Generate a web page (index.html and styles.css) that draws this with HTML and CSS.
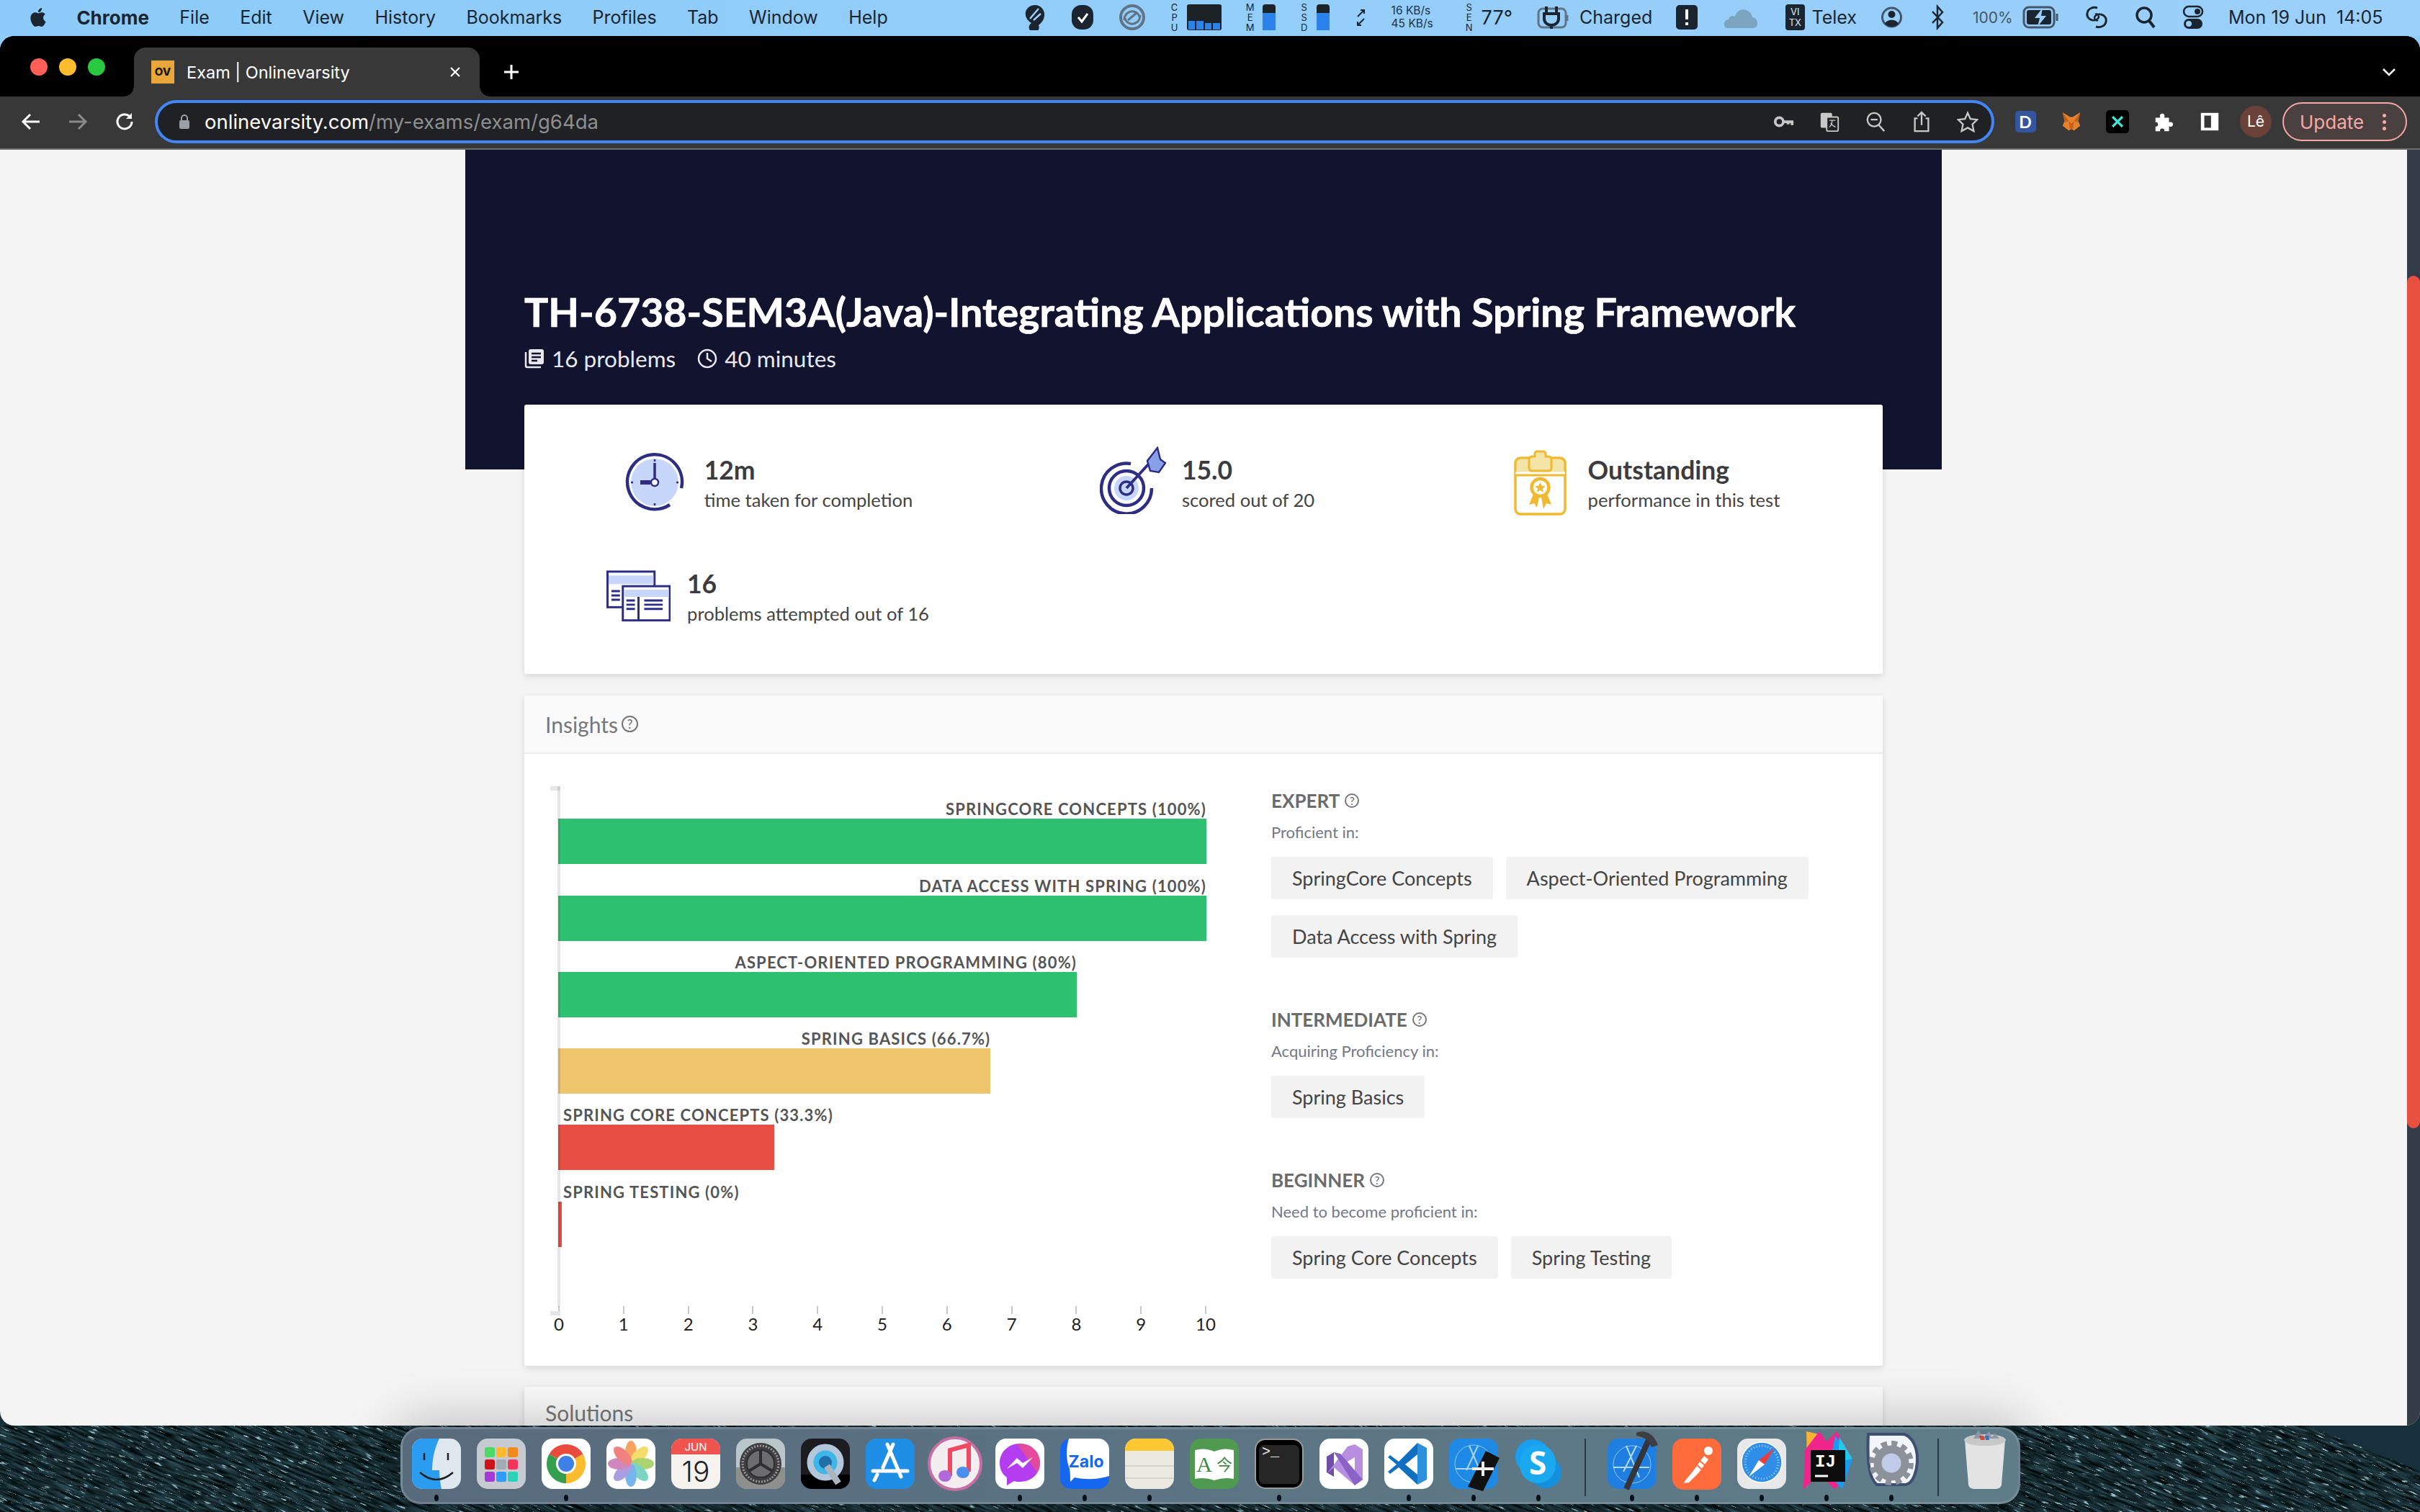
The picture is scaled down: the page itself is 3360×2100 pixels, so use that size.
FILE: index.html
```html
<!DOCTYPE html>
<html lang="en">

<head>
  <meta charset="UTF-8">
  <title>Exam | Onlinevarsity</title>
  <link rel="stylesheet" href="styles.css">
</head>

<body>
  <!-- mac menu bar -->
  <div class="menubar">
    <svg class="apple" viewBox="0 0 24 24"><path fill="#1b2530" d="M12.152 6.896c-.948 0-2.415-1.078-3.96-1.04-2.04.027-3.91 1.183-4.961 3.014-2.117 3.675-.546 9.103 1.519 12.09 1.013 1.454 2.208 3.09 3.792 3.039 1.52-.065 2.09-.987 3.935-.987 1.831 0 2.35.987 3.96.948 1.637-.026 2.676-1.48 3.676-2.948 1.156-1.688 1.636-3.325 1.662-3.415-.039-.013-3.182-1.221-3.22-4.857-.026-3.04 2.48-4.494 2.597-4.559-1.429-2.09-3.623-2.324-4.39-2.376-2-.156-3.675 1.09-4.61 1.09zM15.53 3.83c.843-1.012 1.4-2.427 1.245-3.83-1.207.052-2.662.805-3.532 1.818-.78.896-1.454 2.338-1.273 3.714 1.338.104 2.715-.688 3.559-1.701"/></svg>
    <span class="app-name">Chrome</span>
    <span>File</span><span>Edit</span><span>View</span><span>History</span><span>Bookmarks</span><span>Profiles</span><span>Tab</span><span>Window</span><span>Help</span>

    <div class="status">
      <svg class="st st-32" viewBox="0 0 32 36"><path d="M16 1c9 0 14 8 13 15-1 8-6 11-8 13a7 7 0 1 1-10-3C5 22 2 17 3 11 4 5 10 1 16 1z" fill="#1b2530"/><path d="M9 20 21 6M14 22l10-9" stroke="#9acffa" stroke-width="2.500"/></svg>
      <svg class="st st-32" viewBox="0 0 32 36"><rect x="1" y="1" width="30" height="34" rx="13" fill="#1b2530"/><path d="M10 18l5 6 8-11" stroke="#fff" stroke-width="3" fill="none"/></svg>
      <svg class="st st-38" viewBox="0 0 38 36"><circle cx="19" cy="18" r="16" fill="none" stroke="#5f7486" stroke-width="4"/><path d="M8 22c0-9 7-13 13-12 5 1 8 5 8 8M30 15c0 9-7 13-13 12-5-1-8-5-8-8M13 22 25 12" fill="none" stroke="#5f7486" stroke-width="3"/></svg>

      <div class="pair gauge">
        <span class="vert">C<br>P<br>U</span>
        <div class="cpu-graph"><i class="h-a"></i><i class="h-a"></i><i class="h-b"></i><i class="h-b"></i></div>
      </div>
      <div class="pair gauge">
        <span class="vert">M<br>E<br>M</span>
        <div class="mini-bar"><i></i></div>
      </div>
      <div class="pair gauge">
        <span class="vert">S<br>S<br>D</span>
        <div class="mini-bar"><i></i></div>
      </div>
      <svg class="st st-18" viewBox="0 0 18 36"><path d="M5 17 14 8M9 8h5v5M14 20 5 29M5 24v5h5" stroke="#1b2530" stroke-width="2" fill="none"/></svg>
      <div class="net"><span>16 KB/s</span><span>45 KB/s</span></div>
      <div class="pair temp">
        <span class="vert">S<br>E<br>N</span>
        <span class="temp-val">77°</span>
      </div>
      <div class="pair charged">
        <svg class="st st-44" viewBox="0 0 44 36"><rect x="2" y="6" width="38" height="26" rx="6" fill="none" stroke="#5f7486" stroke-width="3"/><path d="M42 15v8" stroke="#5f7486" stroke-width="3"/><path d="M13 3v10M27 3v10M10 13h20v7a10 9 0 0 1-20 0zM20 28v6" stroke="#1b2530" stroke-width="4" fill="none"/></svg>
        <span>Charged</span>
      </div>
      <svg class="st st-32" viewBox="0 0 32 36"><rect x="1" y="1" width="30" height="34" rx="5" fill="#1b2530"/><path d="M16 7v14M16 25v4" stroke="#fff" stroke-width="4"/></svg>
      <svg class="st st-53" viewBox="0 0 53 36"><path d="M6 33c-6-1-6-11 2-12 1-5 6-6 9-4 3-13 21-13 24 1 8 0 10 14 2 15z" fill="#7ba4c1"/></svg>
      <div class="pair telex">
        <div class="telex-mark">VI<br>TX</div>
        <span>Telex</span>
      </div>
      <svg class="st st-29" viewBox="0 0 29 36"><circle cx="14.500" cy="18" r="13" fill="none" stroke="#44566a" stroke-width="3"/><circle cx="14.500" cy="14" r="5" fill="#1b2530"/><path d="M5 27c3-7 16-7 19 0a13 13 0 0 1-19 0z" fill="#1b2530"/></svg>
      <svg class="st st-30" viewBox="0 0 30 36"><path d="M8 10 22 25 15 33V3l7 8L8 26" fill="none" stroke="#1b2530" stroke-width="2.500"/></svg>
      <div class="pair batt">
        <span class="pct">100%</span>
        <svg class="st st-52" viewBox="0 0 52 32"><rect x="2" y="2" width="42" height="28" rx="7" fill="none" stroke="#44566a" stroke-width="3"/><rect x="6" y="6" width="34" height="20" rx="3" fill="#1b2530"/><path d="M48 11v10" stroke="#44566a" stroke-width="3"/><path d="M28 3 17 17h7l-3 12 12-15h-7z" fill="#9acffa"/></svg>
      </div>
      <svg class="st st-34" viewBox="0 0 34 36"><path d="M18 5c-6-2-13 1-14 7-1 5 2 9 7 10M16 31c6 2 13-1 14-7 1-5-2-9-7-10" fill="none" stroke="#1b2530" stroke-width="3"/><path d="M11 22c5 1 9-2 9-5s-3-4-5-3M23 14c-5-1-9 2-9 5s3 4 5 3" fill="none" stroke="#1b2530" stroke-width="2.500"/></svg>
      <svg class="st st-34" viewBox="0 0 34 36"><circle cx="15" cy="15" r="10" fill="none" stroke="#1b2530" stroke-width="3.500"/><path d="M22 23l7 9" stroke="#1b2530" stroke-width="4"/></svg>
      <svg class="st st-30" viewBox="0 0 30 36"><rect x="2" y="3" width="26" height="14" rx="7" fill="none" stroke="#1b2530" stroke-width="2.500"/><circle cx="21" cy="10" r="4" fill="#1b2530"/><rect x="2" y="20" width="26" height="14" rx="7" fill="#1b2530"/><circle cx="9" cy="27" r="4" fill="#9acffa"/></svg>
      <span class="clock-text">Mon 19 Jun&nbsp;&nbsp;14:05</span>
    </div>
  </div>

  <div class="window">
    <!-- tab strip -->
    <div class="tabstrip">
      <div class="lights"><i class="red"></i><i class="amber"></i><i class="green"></i></div>
      <div class="tab">
        <span class="favicon">OV</span>
        <span class="tab-title">Exam | Onlinevarsity</span>
        <svg class="tab-x" viewBox="0 0 16 16"><path d="M2 2l12 12M14 2 2 14" stroke="#fff" stroke-width="2.200"/></svg>
      </div>
      <svg class="new-tab" viewBox="0 0 24 24"><path d="M12 2v20M2 12h20" stroke="#fff" stroke-width="3"/></svg>
      <svg class="tab-menu" viewBox="0 0 20 12"><path d="M2 2l8 8 8-8" fill="none" stroke="#fff" stroke-width="2.500"/></svg>
    </div>

    <!-- toolbar -->
    <div class="toolbar">
      <div class="nav-btn"><svg viewBox="0 0 28 28"><path d="M26 14H3M13 4 3 14l10 10" fill="none" stroke="#fff" stroke-width="3"/></svg></div>
      <div class="nav-btn"><svg viewBox="0 0 28 28"><path d="M2 14h23M15 4l10 10-10 10" fill="none" stroke="#8a8a8a" stroke-width="3"/></svg></div>
      <div class="nav-btn"><svg viewBox="0 0 28 28"><path d="M24 14a10 10 0 1 1-3-7.200" fill="none" stroke="#fff" stroke-width="3"/><path d="M24 2v8h-8z" fill="#fff"/></svg></div>
      <div class="omnibox">
        <svg class="lock" viewBox="0 0 16 22"><path d="M4 10V6a4 4 0 0 1 8 0v4" fill="none" stroke="#9aa0a6" stroke-width="2"/><rect x="1" y="9" width="14" height="12" rx="2" fill="#9aa0a6"/></svg>
        <span class="url"><b>onlinevarsity.com</b>/my-exams/exam/g64da</span>
        <div class="omni-act"><svg viewBox="0 0 32 32"><circle cx="10" cy="16" r="6" fill="none" stroke="#c8c8c8" stroke-width="4"/><path d="M16 16h13v5M23 16v4" fill="none" stroke="#c8c8c8" stroke-width="4"/></svg></div>
        <div class="omni-act"><svg viewBox="0 0 32 32"><rect x="3" y="3" width="17" height="22" rx="2" fill="#c8c8c8"/><rect x="12" y="9" width="17" height="21" rx="2" fill="#202124" stroke="#c8c8c8" stroke-width="2"/><path d="M16 14h9M20 14c0 6-2 8-4 10M18 18c2 3 4 5 7 6" fill="none" stroke="#c8c8c8" stroke-width="1.500"/></svg></div>
        <div class="omni-act"><svg viewBox="0 0 32 32"><circle cx="14" cy="13" r="10" fill="none" stroke="#c8c8c8" stroke-width="2.500"/><path d="M21 21l8 9M9 13h10" stroke="#c8c8c8" stroke-width="2.500"/></svg></div>
        <div class="omni-act"><svg viewBox="0 0 32 32"><path d="M10 11H6v19h20V11h-4M16 21V2M10 8l6-6 6 6" fill="none" stroke="#c8c8c8" stroke-width="2.500"/></svg></div>
        <div class="omni-act"><svg viewBox="0 0 32 32"><path d="M16 3l4 9 10 1-7 7 2 10-9-5-9 5 2-10-7-7 10-1z" fill="none" stroke="#c8c8c8" stroke-width="2.500"/></svg></div>
      </div>
      <div class="extensions">
        <div class="ext"><span class="ext-d">D</span></div>
        <div class="ext"><svg viewBox="0 0 32 32"><path d="M3 2l11 7h4l11-7-3 12 3 8-9 7-4-2-4 2-9-7 3-8z" fill="#e8812c"/><path d="M12 15l4 4 4-4-2 12h-4z" fill="#c65f1c"/><path d="M3 2l9 13-6 2zM29 2l-9 13 6 2z" fill="#b9641f"/></svg></div>
        <div class="ext"><div class="ext-x"><svg viewBox="0 0 32 32"><path d="M6 6l20 20M26 6 6 26" stroke="#3ee6d6" stroke-width="5"/></svg></div></div>
        <div class="ext"><svg viewBox="0 0 32 32"><path d="M4 10h7c-3-8 9-8 6 0h7v7c8-3 8 9 0 6v7h-7c2-5-8-5-6 0H4v-7c5 2 5-8 0-6z" fill="#fff"/></svg></div>
        <div class="ext"><svg viewBox="0 0 32 32"><rect x="3" y="3" width="26" height="26" fill="#fff"/><rect x="8" y="7" width="10" height="18" fill="#363636"/></svg></div>
        <div class="ext"><span class="avatar">Lê</span></div>
      </div>
      <div class="update-pill">
        <span>Update</span>
        <i class="dots"><b></b><b></b><b></b></i>
      </div>
    </div>

    <!-- page -->
    <div class="viewport">
      <div class="page">
        <div class="exam-header">
          <h1>TH-6738-SEM3A(Java)-Integrating Applications with Spring Framework</h1>
          <div class="exam-meta">
            <span class="meta-item">
              <svg class="meta-icon" viewBox="0 0 28 28"><path d="M2 5v19a2 2 0 0 0 2 2h19" fill="none" stroke="#e8e8ee" stroke-width="2.500"/><rect x="6" y="1" width="21" height="21" rx="3" fill="#e8e8ee"/><path d="M10 7h13M10 12h13M10 17h8" stroke="#11132f" stroke-width="2.500"/></svg>
              16 problems
            </span>
            <span class="meta-item">
              <svg class="meta-icon" viewBox="0 0 28 28"><circle cx="14" cy="14" r="12" fill="none" stroke="#e8e8ee" stroke-width="2.500"/><path d="M14 6v8l6 4" fill="none" stroke="#e8e8ee" stroke-width="2.500"/></svg>
              40 minutes
            </span>
          </div>
        </div>

        <div class="cards">
          <div class="card summary">
            <div class="stat">
              <svg class="stat-clock" viewBox="0 0 84 84">
                <circle cx="41" cy="42" r="33" fill="#c7d6fb"/>
                <path d="M62 73A38 38 0 1 1 78 50" fill="none" stroke="#2d2d86" stroke-width="4.500"/>
                <path d="M41 10v3M41 71v3M8 42h3M71 42h3" stroke="#2d2d86" stroke-width="2.500"/>
                <path d="M41 15v23" stroke="#2d2d86" stroke-width="3.500"/>
                <path d="M21 42h14" stroke="#2d2d86" stroke-width="6"/>
                <circle cx="41" cy="42" r="5" fill="#fff" stroke="#2d2d86" stroke-width="2.500"/>
              </svg>
              <div class="stat-text"><strong>12m</strong><span>time taken for completion</span></div>
            </div>
            <div class="stat">
              <svg class="stat-target" viewBox="0 0 92 94">
                <path d="M43 24A35 35 0 1 0 72 58" fill="none" stroke="#2d2d86" stroke-width="4.500"/>
                <circle cx="37" cy="58" r="24" fill="#fff" stroke="#2d2d86" stroke-width="4.500"/>
                <circle cx="37" cy="58" r="17" fill="#c7d6fb"/>
                <circle cx="37" cy="58" r="9" fill="none" stroke="#2d2d86" stroke-width="3.500"/>
                <path d="M37 58 70 22" stroke="#2d2d86" stroke-width="4"/>
                <path d="M80 2l4 16 7 5-9 13-12-2-4-14z" fill="#8aa0e6" stroke="#2d2d86" stroke-width="2.500"/>
              </svg>
              <div class="stat-text"><strong>15.0</strong><span>scored out of 20</span></div>
            </div>
            <div class="stat">
              <svg class="stat-award" viewBox="0 0 75 92">
                <path d="M5 14h65v19H5z" fill="#f5e4a8"/>
                <rect x="3" y="12" width="69" height="78" rx="7" fill="none" stroke="#f0b92f" stroke-width="3.500"/>
                <path d="M3 33h69" stroke="#fff" stroke-width="3"/>
                <path d="M3 36h69" stroke="#f0b92f" stroke-width="3"/>
                <path d="M28 10h2V6a3 3 0 0 1 3-3h9a3 3 0 0 1 3 3v4h4a4 4 0 0 1 4 4v12a4 4 0 0 1-4 4H26a4 4 0 0 1-4-4V14a4 4 0 0 1 4-4z" fill="#f5e4a8" stroke="#f0b92f" stroke-width="3"/>
                <path d="M28 62l-6 15 7-2 4 6 3-15zM47 62l6 15-7-2-4 8-3-17z" fill="#f0b92f"/>
                <circle cx="37.500" cy="53" r="12" fill="#fff" stroke="#f0b92f" stroke-width="4.500"/>
                <path d="M37.500 46l2.200 4.800 5 .5-3.800 3.400 1.100 5-4.500-2.700-4.500 2.700 1.100-5-3.800-3.400 5-.5z" fill="#f0b92f"/>
              </svg>
              <div class="stat-text"><strong>Outstanding</strong><span>performance in this test</span></div>
            </div>
            <div class="stat">
              <svg class="stat-problems" viewBox="0 0 90 72">
                <rect x="1.500" y="1.500" width="66" height="50" fill="#fff" stroke="#2d2d86" stroke-width="3"/>
                <rect x="3" y="7" width="63" height="12" fill="#c7d6fb"/>
                <path d="M7 29h12M7 35h12M7 41h12" stroke="#2d2d86" stroke-width="3"/>
                <rect x="23" y="22" width="66" height="48" fill="#fff" stroke="#2d2d86" stroke-width="3"/>
                <rect x="24.500" y="27" width="63" height="10" fill="#c7d6fb"/>
                <path d="M45 37v33M28 42h12M28 48h12M28 54h12M53 42h26M53 48h26M53 54h26" stroke="#2d2d86" stroke-width="3"/>
              </svg>
              <div class="stat-text"><strong>16</strong><span>problems attempted out of 16</span></div>
            </div>
          </div>

          <div class="card insights">
            <div class="card-head">Insights <span class="help help-lg">?</span></div>
            <div class="insights-body">
              <div class="chart">
                <div class="plot">
                  <div class="bar-row is-green" style="width:100%"><span class="bar-label">SPRINGCORE CONCEPTS (100%)</span><i class="bar-fill"></i></div>
                  <div class="bar-row is-green" style="width:100%"><span class="bar-label">DATA ACCESS WITH SPRING (100%)</span><i class="bar-fill"></i></div>
                  <div class="bar-row is-green" style="width:80%"><span class="bar-label">ASPECT-ORIENTED PROGRAMMING (80%)</span><i class="bar-fill"></i></div>
                  <div class="bar-row is-yellow" style="width:66.7%"><span class="bar-label">SPRING BASICS (66.7%)</span><i class="bar-fill"></i></div>
                  <div class="bar-row is-red is-low" style="width:33.3%"><span class="bar-label">SPRING CORE CONCEPTS (33.3%)</span><i class="bar-fill"></i></div>
                  <div class="bar-row is-red is-low" style="width:0.6%"><span class="bar-label">SPRING TESTING (0%)</span><i class="bar-fill"></i></div>
                </div>
                <div class="x-axis">
                  <div class="tick">0</div><div class="tick">1</div><div class="tick">2</div><div class="tick">3</div><div class="tick">4</div><div class="tick">5</div><div class="tick">6</div><div class="tick">7</div><div class="tick">8</div><div class="tick">9</div><div class="tick">10</div>
                </div>
              </div>

              <div class="skills">
                <div class="skill-group">
                  <h3>EXPERT <span class="help">?</span></h3>
                  <p>Proficient in:</p>
                  <div class="chips"><span>SpringCore Concepts</span><span>Aspect-Oriented Programming</span><span>Data Access with Spring</span></div>
                </div>
                <div class="skill-group">
                  <h3>INTERMEDIATE <span class="help">?</span></h3>
                  <p>Acquiring Proficiency in:</p>
                  <div class="chips"><span>Spring Basics</span></div>
                </div>
                <div class="skill-group">
                  <h3>BEGINNER <span class="help">?</span></h3>
                  <p>Need to become proficient in:</p>
                  <div class="chips"><span>Spring Core Concepts</span><span>Spring Testing</span></div>
                </div>
              </div>
            </div>
          </div>

          <div class="card solutions">
            <div class="card-head">Solutions</div>
          </div>
        </div>
      </div>
      <div class="scrollbar"><i></i></div>
    </div>
  </div>

  <!-- desktop + dock -->
  <div class="desk">
    <svg class="wallpaper" width="3360" height="120">
      <defs>
        <filter id="water" x="0" y="0" width="100%" height="100%" color-interpolation-filters="sRGB">
          <feTurbulence type="fractalNoise" baseFrequency="0.03 0.3" numOctaves="3" seed="7"/>
          <feColorMatrix type="matrix" values="0.36 0 0 0 -0.1  0.52 0 0 0 -0.1  0.6 0 0 0 -0.12  0 0 0 0 1"/>
        </filter>
        <filter id="glint" x="0" y="0" width="100%" height="100%" color-interpolation-filters="sRGB">
          <feTurbulence type="fractalNoise" baseFrequency="0.06 0.55" numOctaves="3" seed="3"/>
          <feColorMatrix type="matrix" values="0 0 0 0 0.62  0 0 0 0 0.78  0 0 0 0 0.82  7 0 0 0 -4.400"/>
        </filter>
      </defs>
      <rect width="3800" height="1600" x="-100" y="-1200" transform="rotate(22)" filter="url(#water)"/>
      <rect width="3800" height="1600" x="-100" y="-1200" transform="rotate(22)" filter="url(#glint)"/>
    </svg>

    <div class="dock">
      <div class="dock-item on"><svg viewBox="0 0 68 70"><rect width="68" height="70" rx="15" fill="#dfe7ef"/><path d="M15 0h23c-7 14-10 30-10 44h10c0 8 1 18 3 26H15A15 15 0 0 1 0 55V15A15 15 0 0 1 15 0z" fill="#2a9df0"/><path d="M17 20v10M50 20v10" stroke="#222" stroke-width="2.500"/><path d="M11 47q23 20 46 0" fill="none" stroke="#222" stroke-width="2.500"/></svg></div>
      <div class="dock-item"><svg viewBox="0 0 68 70"><rect width="68" height="70" rx="15" fill="#c6cbd2"/><g><rect x="11" y="12" width="14" height="14" rx="3" fill="#4cd964"/><rect x="27" y="12" width="14" height="14" rx="3" fill="#ffb92e"/><rect x="43" y="12" width="14" height="14" rx="3" fill="#f28a1e"/><rect x="11" y="29" width="14" height="14" rx="3" fill="#d0141c"/><rect x="27" y="29" width="14" height="14" rx="3" fill="#a3acb4"/><rect x="43" y="29" width="14" height="14" rx="3" fill="#f5365c"/><rect x="11" y="46" width="14" height="14" rx="3" fill="#a23ad6"/><rect x="27" y="46" width="14" height="14" rx="3" fill="#2f9df5"/><rect x="43" y="46" width="14" height="14" rx="3" fill="#2bd1b8"/></g></svg></div>
      <div class="dock-item on"><svg viewBox="0 0 68 70"><rect width="68" height="70" rx="15" fill="#fff"/><path d="M34 35 10.600 21.500A27 27 0 0 1 57.400 21.500z" fill="#e94b3c"/><path d="M34 35 57.400 21.500A27 27 0 0 1 34 62z" fill="#fbbc2e"/><path d="M34 35V62A27 27 0 0 1 10.600 21.500z" fill="#34a04f"/><circle cx="34" cy="35" r="14" fill="#fff"/><circle cx="34" cy="35" r="11" fill="#3f7fe8"/></svg></div>
      <div class="dock-item"><svg viewBox="0 0 68 70"><rect width="68" height="70" rx="15" fill="#fff"/><g opacity=".75"><ellipse cx="34" cy="19" rx="8" ry="16" fill="#f7852f"/><ellipse cx="34" cy="19" rx="8" ry="16" fill="#f0d23a" transform="rotate(45 34 35)"/><ellipse cx="34" cy="19" rx="8" ry="16" fill="#8fc63f" transform="rotate(90 34 35)"/><ellipse cx="34" cy="19" rx="8" ry="16" fill="#4fc7b0" transform="rotate(135 34 35)"/><ellipse cx="34" cy="19" rx="8" ry="16" fill="#4a9ee8" transform="rotate(180 34 35)"/><ellipse cx="34" cy="19" rx="8" ry="16" fill="#8d7fd6" transform="rotate(225 34 35)"/><ellipse cx="34" cy="19" rx="8" ry="16" fill="#c05fa8" transform="rotate(270 34 35)"/><ellipse cx="34" cy="19" rx="8" ry="16" fill="#ec5a56" transform="rotate(315 34 35)"/></g></svg></div>
      <div class="dock-item"><svg viewBox="0 0 68 70"><rect width="68" height="70" rx="15" fill="#f6f3ef"/><path d="M0 22V15A15 15 0 0 1 15 0h38a15 15 0 0 1 15 15v7z" fill="#f0544f"/><text x="34" y="17" class="ic-jun">JUN</text><text x="34" y="60" class="ic-day">19</text></svg></div>
      <div class="dock-item"><svg viewBox="0 0 68 70"><rect width="68" height="70" rx="15" fill="#b9c6ca"/><path d="M0 40h68v15a15 15 0 0 1-15 15H15A15 15 0 0 1 0 55z" fill="#8f8f8d"/><circle cx="34" cy="35" r="29" fill="#3e3e40"/><circle cx="34" cy="35" r="25" fill="none" stroke="#9a9a9c" stroke-width="3" stroke-dasharray="2 2"/><circle cx="34" cy="35" r="19" fill="#6d6d70" stroke="#2e2e30" stroke-width="2"/><path d="M34 35V16M34 35 18 45M34 35l16 10" stroke="#2e2e30" stroke-width="4"/></svg></div>
      <div class="dock-item"><svg viewBox="0 0 68 70"><rect width="68" height="70" rx="15" fill="#1b1b20"/><path d="M0 50h68v5a15 15 0 0 1-15 15H15A15 15 0 0 1 0 55z" fill="#000"/><circle cx="34" cy="33" r="21" fill="#3fb6e8" stroke="#b4c6da" stroke-width="9"/><circle cx="34" cy="33" r="9" fill="#1f6fa8"/><path d="M36 38l16 24" stroke="#a8b4c2" stroke-width="9"/></svg></div>
      <div class="dock-item"><svg viewBox="0 0 68 70"><rect width="68" height="70" rx="15" fill="#1f8fe6"/><path d="M30 8l19 45M38 8 24 40M10 45h48M16 50l-4 8" fill="none" stroke="#fff" stroke-width="5" stroke-linecap="round"/></svg></div>
      <div class="dock-item"><svg class="ic-big" viewBox="0 0 76 86"><circle cx="38" cy="43" r="36" fill="#f4eef0" stroke="#c76fa5" stroke-width="4"/><path d="M31 60V24l26-7v37" fill="none" stroke="#ee4a62" stroke-width="6"/><ellipse cx="24" cy="60" rx="9" ry="8" fill="#b06ad8"/><ellipse cx="49" cy="55" rx="9" ry="8" fill="#4c8df0"/></svg></div>
      <div class="dock-item on"><svg viewBox="0 0 68 70"><rect width="68" height="70" rx="15" fill="#fff"/><path d="M34 7c16 0 28 12 28 27S50 60 34 60c-3 0-6 0-8-1l-10 6V54C10 50 6 43 6 34 6 19 18 7 34 7z" fill="#b43df0"/><path d="M34 7c16 0 28 12 28 27 0 5-1 9-4 13L30 7z" fill="#f04e86" opacity=".8"/><path d="M16 42l14-15 8 7 14-8-14 15-8-7z" fill="#fff"/></svg></div>
      <div class="dock-item on"><svg viewBox="0 0 68 70"><rect width="68" height="70" rx="15" fill="#1467ee"/><path d="M12 0h41a15 15 0 0 1 15 15v37c-12 4-30 6-48 2l-6 6c0-6 0-12-1-18C8 30 8 14 12 0z" fill="#fff"/><text x="36" y="40" class="ic-zalo">Zalo</text></svg></div>
      <div class="dock-item on"><svg viewBox="0 0 68 70"><rect width="68" height="70" rx="15" fill="#ece9e1"/><path d="M0 17V15A15 15 0 0 1 15 0h38a15 15 0 0 1 15 15v2z" fill="#fdc832"/><path d="M0 38h68M0 55h68" stroke="#cfccc4" stroke-width="1.500"/></svg></div>
      <div class="dock-item"><svg viewBox="0 0 68 70"><rect width="68" height="70" rx="15" fill="#4f9a50"/><path d="M7 16q14-4 27 2 13-6 27-2v40q-14-3-27 2-13-5-27-2z" fill="#fff"/><text x="20" y="46" class="ic-dict">A</text><text x="48" y="44" class="ic-dict-cjk">今</text></svg></div>
      <div class="dock-item on"><svg viewBox="0 0 68 70"><rect width="68" height="70" rx="15" fill="#9a9a9a"/><rect x="2" y="2" width="64" height="66" rx="13" fill="#000"/><rect x="6" y="9" width="56" height="54" rx="7" fill="#262626"/><text x="10" y="24" class="ic-term">&gt;_</text></svg></div>
      <div class="dock-item"><svg viewBox="0 0 68 70"><rect width="68" height="70" rx="15" fill="#fff"/><path d="M10 25l10-6v34l-10-6z" fill="#6f4ea8"/><path d="M49 8l11 7v42l-11 8L20 40l-9 8 28-37zM49 26 34 35l15 11z" fill="#b78ee0"/><path d="M20 19l29 46 11-8-31-36z" fill="#8a63c8"/></svg></div>
      <div class="dock-item on"><svg viewBox="0 0 68 70"><rect width="68" height="70" rx="15" fill="#fff"/><path d="M46 6l13 7v44l-13 7z" fill="#2c91dc"/><path d="M46 6 20 32 8 23l-3 3 12 10L5 46l3 3 12-9 26 24V50L29 36l17-14z" fill="#0f6fc0"/></svg></div>
      <div class="dock-item on"><svg viewBox="0 0 68 70"><rect width="68" height="70" rx="15" fill="#1f8ae6"/><path d="M28 10l18 42M40 10 24 44M9 42h50" stroke="#a8d6f8" stroke-width="2" fill="none"/><circle cx="34" cy="35" r="26" fill="none" stroke="#a8d6f8" stroke-width=".8"/><path d="M51 17l19 10-23 46-21-6z" fill="#111"/><path d="M32 42h30M47 32v20" stroke="#eee" stroke-width="4"/></svg></div>
      <div class="dock-item on"><svg viewBox="0 0 68 70"><circle cx="26" cy="25" r="24" fill="#1a9ff0"/><circle cx="44" cy="47" r="22" fill="#1590dd"/><rect x="8" y="8" width="50" height="54" rx="25" fill="#1aa9ee"/><text x="33" y="50" class="ic-skype">S</text></svg></div>
      <div class="dock-divider"></div>
      <div class="dock-item on"><svg class="ic-over" viewBox="0 0 76 86"><rect x="4" y="14" width="68" height="70" rx="15" fill="#1f7fe0"/><path d="M30 24l18 44M44 24 26 60M12 54h50" stroke="#b4dcfa" stroke-width="2" fill="none"/><circle cx="38" cy="50" r="26" fill="none" stroke="#b4dcfa" stroke-width=".8"/><path d="M62 14 30 84" stroke="#33353a" stroke-width="8"/><path d="M44 6c12-5 24 1 30 17l-9 3c-3-8-9-14-21-16z" fill="#3c3e44"/></svg></div>
      <div class="dock-item on"><svg viewBox="0 0 68 70"><rect width="68" height="71" rx="15" fill="#ff6b3a"/><circle cx="50" cy="17" r="6" fill="#fff"/><path d="M44 24 28 46l-10 12-2 4 7-1 14-14 13-18z" fill="#fff"/><path d="M33 36l8 7M37 30l8 7" stroke="#ff6b3a" stroke-width="2"/></svg></div>
      <div class="dock-item on"><svg viewBox="0 0 68 70"><rect width="68" height="70" rx="15" fill="#e8e8e8"/><circle cx="34" cy="33" r="28" fill="#2f8fe8" stroke="#fff" stroke-width="1.500"/><circle cx="34" cy="33" r="23" fill="none" stroke="#a8d4f8" stroke-width="3" stroke-dasharray="1 3"/><path d="M52 13 30 30l8 6z" fill="#ee3b34"/><path d="M16 53l14-23 8 6z" fill="#fff"/></svg></div>
      <div class="dock-item on"><svg class="ic-over" viewBox="0 0 76 86"><path d="M10 4l18 4 8 14-28 24 4 38z" fill="#f9b233"/><path d="M8 30 28 4l10 14 14-14 22 38-14 34-12 8-18-20L6 84z" fill="#f0258c"/><path d="M50 10 74 42 60 84 40 64z" fill="#1c9af0"/><path d="M56 12 74 42l-20 4z" fill="#22c8e8"/><rect x="16" y="30" width="48" height="44" fill="#0c0c0c"/><text x="22" y="53" class="ic-ij">IJ</text><path d="M22 66h18" stroke="#fff" stroke-width="3"/></svg></div>
      <div class="dock-item on"><svg class="ic-over" viewBox="0 0 76 86"><path d="M6 8h50c12 4 18 20 18 34 0 18-6 34-16 36H18C8 70 4 50 6 8z" fill="#f2f5fb" stroke="#3e4f72" stroke-width="4"/><circle cx="38" cy="48" r="19" fill="#bfcbe8" stroke="#8c919a" stroke-width="11"/><circle cx="38" cy="48" r="27" fill="none" stroke="#8c919a" stroke-width="8" stroke-dasharray="8 6.100"/></svg></div>
      <div class="dock-divider"></div>
      <div class="dock-item"><svg class="ic-over" viewBox="0 0 76 86"><path d="M10 16h56l-5 62a8 6 0 0 1-8 6H23a8 6 0 0 1-8-6z" fill="#e3e3e3"/><ellipse cx="38" cy="16" rx="29" ry="8" fill="#c8c8c8"/><path d="M22 14l7-12 6 12zM34 14l10-10 4 10zM46 14l6-7 6 7z" fill="#8d99a6"/><path d="M30 10h6l2 6h-6z" fill="#d04b3c"/><path d="M38 10h5l1 6h-5z" fill="#3d6fc0"/></svg></div>
    </div>
  </div>
</body>
</html>
```

FILE: styles.css
```css
:root {
  --navy: #11132f;
  --icon-blue: #2d2d86;
  --page-bg: #f4f4f4;
  --menu-ink: #1b2530;
  --toolbar: #383838;
  --green: #2ec071;
  --yellow: #eec56c;
  --red: #e84e43;
}

* {
  box-sizing: border-box;
}

body {
  width: 3360px;
  height: 2100px;
  margin: 0;
  overflow: hidden;
  background: linear-gradient(#8ecdf9 0 200px, #17303c 200px);
  font-family: 'Lato', sans-serif;
  display: flex;
  flex-direction: column;
}

/* menu bar */

.menubar {
  height: 50px;
  flex: none;
  padding: 0 36px 2px 40px;
  display: flex;
  align-items: center;
  gap: 42.400px;
  background: linear-gradient(90deg, #8ccbf9, #9bd0fa);
  color: var(--menu-ink);
  font-family: 'Inter', sans-serif;
  font-size: 25px;
}

.apple {
  width: 26px;
  height: 32px;
  margin-right: -2px;
}

.app-name {
  font-weight: 700;
  font-size: 26px;
}

.status {
  margin-left: auto;
  display: flex;
  align-items: center;
  gap: 34px;
}

.st {
  height: 36px;
  flex: none;
}

.st-18 { width: 18px; }
.st-29 { width: 29px; }
.st-30 { width: 30px; }
.st-32 { width: 32px; }
.st-34 { width: 34px; }
.st-38 { width: 38px; }
.st-44 { width: 44px; }
.st-52 { width: 52px; height: 32px; }
.st-53 { width: 53px; }

.pair {
  display: flex;
  align-items: center;
  gap: 11px;
}

.vert {
  width: 12px;
  font-size: 13px;
  line-height: 14px;
  text-align: center;
}

.cpu-graph {
  width: 48px;
  height: 36px;
  padding: 0 2px 1px;
  background: #1d2226;
  border-radius: 3px;
  display: flex;
  align-items: flex-end;
  gap: 2px;
}

.cpu-graph i {
  flex: 1;
  background: #2b82e8;
}

.h-a { height: 12px; }
.h-b { height: 9px; }

.mini-bar {
  width: 18px;
  height: 36px;
  background: #1d2226;
  border-radius: 4px;
  display: flex;
  align-items: flex-end;
}

.mini-bar i {
  width: 100%;
  height: 24px;
  background: #2b82e8;
}

.net {
  display: flex;
  flex-direction: column;
  font-size: 15.500px;
  line-height: 18px;
  white-space: nowrap;
  width: 68px;
  color: #26313c;
}

.temp {
  gap: 11px;
}

.temp-val {
  font-size: 27px;
}

.charged {
  width: 158px;
  gap: 15px;
  white-space: nowrap;
}

.telex {
  width: 99px;
  gap: 10px;
}

.telex-mark {
  width: 30px;
  height: 36px;
  background: var(--menu-ink);
  border-radius: 4px;
  color: #dfe9f2;
  font-size: 13px;
  line-height: 15px;
  padding-top: 3px;
  text-align: center;
}

.pct {
  font-size: 21px;
  width: 59px;
  color: #44566a;
}

.batt {
  gap: 10px;
}

.clock-text {
  width: 230px;
  white-space: nowrap;
}

/* chrome window */

.window {
  height: 1930px;
  flex: none;
  display: flex;
  flex-direction: column;
  border-radius: 20px;
  overflow: hidden;
  background: #000;
}

.tabstrip {
  height: 84px;
  flex: none;
  display: flex;
  align-items: center;
  padding-left: 42px;
  background: #000;
}

.lights {
  display: flex;
  gap: 16px;
  margin-top: 1px;
}

.lights i {
  width: 24px;
  height: 24px;
  border-radius: 50%;
}

.lights .red { background: #ff5f57; }
.lights .amber { background: #febc2e; }
.lights .green { background: #28c840; }

.tab {
  align-self: flex-end;
  position: relative;
  width: 480px;
  height: 68px;
  margin-left: 40px;
  padding: 0 26px 0 24px;
  display: flex;
  align-items: center;
  background: var(--toolbar);
  border-radius: 16px 16px 0 0;
  color: #fff;
  font-family: 'Inter', sans-serif;
  font-size: 23.500px;
}

.tab::before,
.tab::after {
  content: '';
  position: absolute;
  bottom: 0;
  width: 14px;
  height: 14px;
}

.tab::before {
  left: -14px;
  background: radial-gradient(circle at 0 0, #000 13.500px, var(--toolbar) 14px);
}

.tab::after {
  right: -14px;
  background: radial-gradient(circle at 100% 0, #000 13.500px, var(--toolbar) 14px);
}

.favicon {
  width: 32px;
  height: 32px;
  background: #e9a63b;
  color: #1a1a1a;
  font-size: 15px;
  font-weight: 800;
  line-height: 32px;
  text-align: center;
  flex: none;
}

.tab-title {
  margin-left: 17px;
  white-space: nowrap;
}

.tab-x {
  width: 16px;
  height: 16px;
  margin-left: auto;
}

.new-tab {
  width: 24px;
  height: 24px;
  margin: 16px 0 0 32px;
}

.tab-menu {
  width: 20px;
  height: 12px;
  margin: 16px 33px 0 auto;
}

.toolbar {
  height: 74px;
  flex: none;
  display: flex;
  align-items: center;
  padding: 0 0 2px 10px;
  background: var(--toolbar);
  border-bottom: 2px solid #6c6c6c;
}

.nav-btn {
  width: 65px;
  display: flex;
  justify-content: center;
}

.nav-btn svg {
  width: 28px;
  height: 28px;
}

.omnibox {
  width: 2554px;
  height: 60px;
  margin-left: 10px;
  padding: 0 1px 0 29px;
  display: flex;
  align-items: center;
  background: #202124;
  border: 4px solid #4285f4;
  border-radius: 30px;
  font-family: 'Inter', sans-serif;
  font-size: 27.500px;
  color: #8f8f8f;
}

.lock {
  width: 16px;
  height: 22px;
  flex: none;
}

.url {
  flex: 1;
  margin-left: 20px;
  white-space: nowrap;
}

.url b {
  font-weight: 400;
  color: #fff;
}

.omni-act {
  width: 64px;
  display: flex;
  justify-content: center;
}

.omni-act svg {
  width: 30px;
  height: 30px;
}

.extensions {
  display: flex;
  margin-left: 11px;
}

.ext {
  width: 64px;
  height: 56px;
  display: flex;
  align-items: center;
  justify-content: center;
}

.ext > svg {
  width: 30px;
  height: 30px;
}

.ext-d {
  width: 29px;
  height: 30px;
  background: #34569f;
  border-radius: 5px;
  color: #fff;
  font-weight: 700;
  font-size: 23px;
  line-height: 30px;
  text-align: center;
}

.ext-x {
  width: 32px;
  height: 32px;
  background: #000;
  border-radius: 5px;
  padding: 5px;
}

.ext-x svg {
  display: block;
}

.avatar {
  width: 44px;
  height: 44px;
  background: #6a4239;
  border-radius: 50%;
  color: #fff;
  font-family: 'Inter', sans-serif;
  font-size: 21px;
  line-height: 44px;
  text-align: center;
}

.update-pill {
  width: 173px;
  height: 54px;
  margin-left: 5px;
  padding: 0 0 0 22px;
  display: flex;
  align-items: center;
  background: #4b4040;
  border: 2.500px solid #f4a9a4;
  border-radius: 27px;
  color: #f4a9a4;
  font-family: 'Inter', sans-serif;
  font-size: 26px;
}

.dots {
  margin-left: 26px;
  display: flex;
  flex-direction: column;
  gap: 4px;
}

.dots b {
  width: 5px;
  height: 5px;
  background: #f4a9a4;
  border-radius: 50%;
}

/* page */

.viewport {
  flex: 1;
  min-height: 0;
  display: flex;
  background: var(--page-bg);
}

.page {
  flex: 1;
  overflow: hidden;
}

.scrollbar {
  width: 18px;
  flex: none;
  padding-top: 175px;
  background: #343c48;
}

.scrollbar i {
  display: block;
  height: 1184px;
  background: #e8503f;
  border-radius: 9px;
}

.exam-header {
  width: 2050px;
  height: 444px;
  margin: 0 auto;
  padding: 190px 0 0 82px;
  background: var(--navy);
  color: #fff;
}

h1 {
  margin: 0;
  font-size: 55.500px;
  line-height: 70px;
  font-weight: 700;
  white-space: nowrap;
  -webkit-text-stroke: 0.7px #fff;
}

.exam-meta {
  margin-top: 10px;
  display: flex;
  gap: 30px;
  font-size: 31.500px;
  line-height: 40px;
  color: #e8e8ee;
}

.meta-item {
  display: flex;
  align-items: center;
  gap: 10px;
}

.meta-icon {
  width: 28px;
  height: 28px;
}

.cards {
  width: 1886px;
  margin: -90px auto 0;
}

.card {
  background: #fff;
  border-radius: 3px;
  box-shadow: 0 3px 10px rgba(0, 0, 0, 0.13);
  position: relative;
}

.summary {
  height: 374px;
  padding: 29px 33px 0;
  display: grid;
  grid-template-columns: repeat(3, 610px);
  grid-auto-rows: 158px;
  align-items: center;
  justify-items: center;
}

.stat {
  display: flex;
  align-items: center;
  gap: 25px;
  color: #3b3b40;
}

.stat-clock { width: 84px; height: 84px; margin: 0 1px 0 3px; }
.stat-target { width: 92px; height: 94px; margin: -6px -3px 0 0; }
.stat-award { width: 75px; height: 92px; margin-right: 4px; }
.stat-problems { width: 89px; height: 72px; margin-right: -2px; }

.stat-text {
  display: flex;
  flex-direction: column;
  padding-top: 4px;
}

.stat-text strong {
  font-size: 35.500px;
  line-height: 44px;
  font-weight: 700;
}

.stat-text span {
  font-size: 25.600px;
  line-height: 38px;
  white-space: nowrap;
  color: #444;
}

.insights {
  height: 931px;
  margin-top: 30px;
}

.card-head {
  height: 81px;
  padding-left: 29px;
  display: flex;
  align-items: center;
  gap: 5px;
  background: #fafafa;
  border-bottom: 2px solid #ececec;
  font-size: 30px;
  line-height: 28px;
  color: #777;
}

.solutions .card-head {
  height: 72px;
  border-bottom: 0;
}

.help {
  width: 20px;
  height: 20px;
  border: 2px solid #777;
  border-radius: 50%;
  display: inline-flex;
  align-items: center;
  justify-content: center;
  font-size: 15px;
  line-height: 1;
  font-weight: 400;
  color: #666;
}

.help-lg {
  width: 23px;
  height: 23px;
  font-size: 17px;
}

.insights-body {
  display: flex;
}

/* bar chart */

.chart {
  width: 1037px;
  flex: none;
  padding: 45px 0 0 47px;
}

.plot {
  position: relative;
  width: 900px;
  height: 723px;
  padding-top: 2px;
}

.plot::before {
  content: '';
  position: absolute;
  left: -1px;
  top: 0;
  bottom: 0;
  width: 4px;
  background: rgba(0, 0, 0, 0.1);
  z-index: 1;
}

.plot::after {
  content: '';
  position: absolute;
  left: -11px;
  top: 0;
  width: 14px;
  height: 100%;
  border-top: 6px solid #e6e6e6;
  border-bottom: 6px solid #e6e6e6;
}

.bar-row {
  height: 106.300px;
  display: flex;
  flex-direction: column;
  justify-content: flex-end;
}

.bar-label {
  font-size: 22px;
  line-height: 26px;
  font-weight: 700;
  letter-spacing: 1.150px;
  white-space: nowrap;
  color: #555;
  text-align: right;
  unicode-bidi: plaintext;
}

.is-low .bar-label {
  text-align: left;
  padding-left: 7px;
}

.bar-fill {
  display: block;
  height: 63px;
  flex: none;
}

.is-green .bar-fill { background: var(--green); }
.is-yellow .bar-fill { background: var(--yellow); }
.is-red .bar-fill { background: var(--red); }

.x-axis {
  width: 900px;
  margin-top: -1px;
  display: flex;
  justify-content: space-between;
}

.tick {
  width: 2px;
  display: flex;
  flex-direction: column;
  align-items: center;
  font-size: 24px;
  line-height: 28px;
  color: #222;
}

.tick::before {
  content: '';
  width: 2px;
  height: 11px;
  flex: none;
  background: #c8c8c8;
}

/* skill chips */

.skills {
  flex: 1;
  padding-top: 50px;
}

.skill-group + .skill-group {
  margin-top: 71px;
}

h3 {
  margin: 0;
  font-size: 26px;
  line-height: 30px;
  font-weight: 700;
  color: #6b6b6b;
  display: flex;
  align-items: center;
  gap: 7px;
}

.skill-group p {
  margin: 15px 0 20px;
  font-size: 22px;
  line-height: 28px;
  color: #727887;
}

.chips {
  display: flex;
  flex-wrap: wrap;
  gap: 22px 18px;
}

.chips span {
  height: 59px;
  padding: 0 29px;
  background: #f2f2f2;
  border-radius: 4px;
  font-size: 27px;
  line-height: 59px;
  color: #444;
  white-space: nowrap;
}

.solutions {
  height: 200px;
  margin-top: 29px;
}

/* desktop and dock */

.desk {
  flex: 1;
  position: relative;
  display: flex;
  justify-content: center;
}

.wallpaper {
  position: absolute;
  left: 0;
  top: 0;
}

.dock {
  position: relative;
  width: 2249px;
  height: 107px;
  margin-top: 2px;
  padding: 0 2px;
  display: flex;
  background: linear-gradient(90deg, #586b7d, #5f7d89);
  border: 3px solid rgba(255, 255, 255, 0.14);
  border-radius: 28px;
  box-shadow: 0 0 70px 10px rgba(0, 0, 0, 0.22);
}

.dock-item {
  width: 90px;
  flex: none;
  padding-top: 13px;
  display: flex;
  flex-direction: column;
  align-items: center;
  position: relative;
}

.dock-item svg {
  width: 68px;
  height: 70px;
  overflow: visible;
  flex: none;
}

.dock-item .ic-big {
  width: 76px;
  height: 86px;
  margin-top: -8px;
  margin-bottom: -8px;
}

.dock-item .ic-over {
  width: 76px;
  height: 86px;
  margin-top: -14px;
  margin-bottom: -2px;
}

.dock-item::after {
  content: '';
  width: 6px;
  height: 9px;
  margin-top: 8px;
  border-radius: 50%;
  background: transparent;
}

.dock-item.on::after {
  background: #0a0f1c;
}

.dock-divider {
  width: 2px;
  height: 80px;
  margin: 13px 19px 0;
  flex: none;
  background: #2c3a48;
}

.ic-jun {
  font: 400 15px 'Inter', sans-serif;
  fill: #fff;
  text-anchor: middle;
}

.ic-day {
  font: 300 39px 'Inter', sans-serif;
  fill: #222;
  text-anchor: middle;
}

.ic-zalo {
  font: 700 23px 'Inter', sans-serif;
  fill: #1467ee;
  text-anchor: middle;
}

.ic-dict {
  font: 400 30px 'Liberation Serif', serif;
  fill: #3d8a45;
  text-anchor: middle;
}

.ic-dict-cjk {
  font: 400 22px 'Noto Sans CJK SC', sans-serif;
  fill: #3d8a45;
  text-anchor: middle;
}

.ic-term {
  font: 400 20px 'Liberation Mono', monospace;
  fill: #eee;
}

.ic-skype {
  font: 700 44px 'Open Sans', sans-serif;
  fill: #fff;
  text-anchor: middle;
}

.ic-ij {
  font: 700 24px 'Liberation Mono', monospace;
  fill: #fff;
}
```
